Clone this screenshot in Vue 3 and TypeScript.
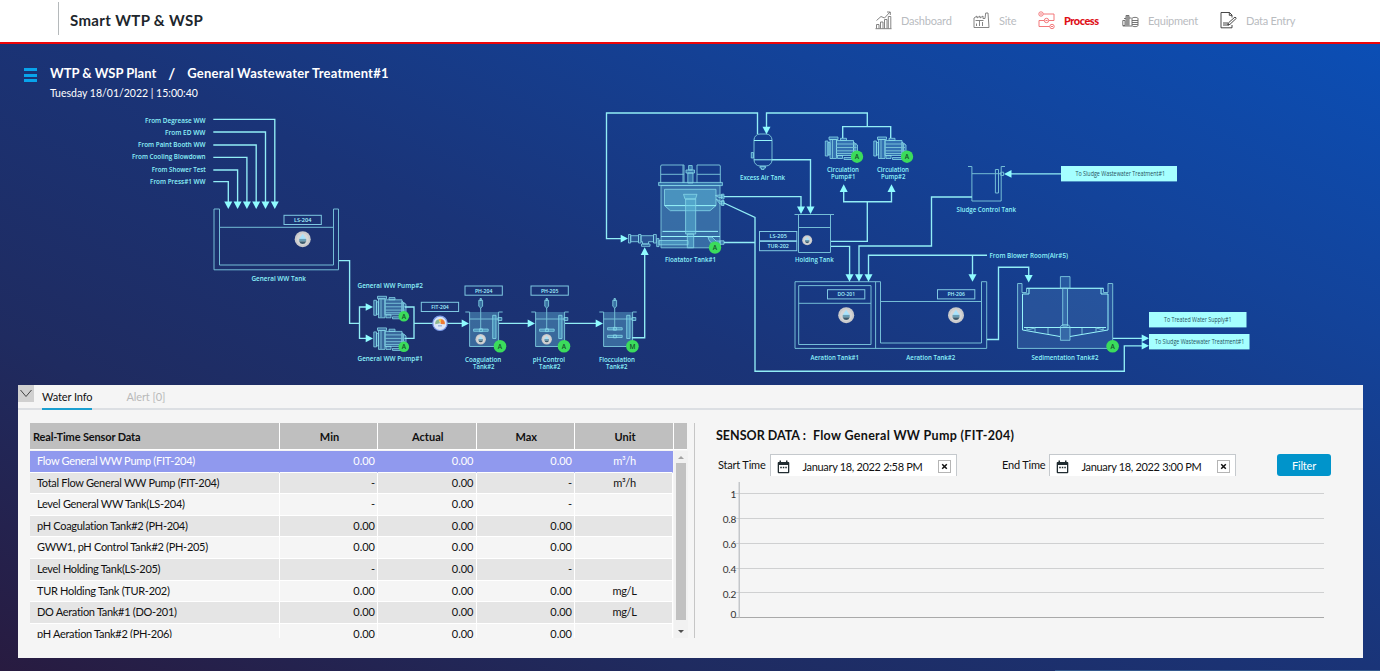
<script setup lang="ts">
interface Label { t: string; x1: number; x2: number; y: number }
interface Point { x: number; y: number }

const nav = [
  { id: 'dash', name: 'Dashboard' },
  { id: 'site', name: 'Site' },
  { id: 'process', name: 'Process' },
  { id: 'equip', name: 'Equipment' },
  { id: 'entry', name: 'Data Entry' },
]

const labels: Label[] = [
  { t: 'From Degrease WW', x1: 145, x2: 205.5, y: 120.7 },
  { t: 'From ED WW', x1: 165, x2: 205.5, y: 132.8 },
  { t: 'From Paint Booth WW', x1: 138, x2: 205.5, y: 145 },
  { t: 'From Cooling Blowdown', x1: 132, x2: 205.5, y: 156.7 },
  { t: 'From Shower Test', x1: 151.7, x2: 205.8, y: 169.5 },
  { t: 'From Press#1 WW', x1: 150, x2: 205.5, y: 181.7 },
  { t: 'General WW Tank', x1: 251.5, x2: 306, y: 278.3 },
  { t: 'General WW Pump#2', x1: 357.5, x2: 423, y: 285.5 },
  { t: 'General WW Pump#1', x1: 357.5, x2: 423, y: 358.5 },
  { t: 'Coagulation', x1: 465, x2: 501.3, y: 359.5 },
  { t: 'Tank#2', x1: 473, x2: 494.5, y: 366.7 },
  { t: 'pH Control', x1: 532.7, x2: 565, y: 359.5 },
  { t: 'Tank#2', x1: 539, x2: 560.5, y: 366.7 },
  { t: 'Flocculation', x1: 599, x2: 635, y: 359.5 },
  { t: 'Tank#2', x1: 606, x2: 627.5, y: 366.7 },
  { t: 'Floatator Tank#1', x1: 665, x2: 716, y: 259.5 },
  { t: 'Excess Air Tank', x1: 740, x2: 785, y: 177.5 },
  { t: 'Circulation', x1: 827, x2: 859, y: 169.7 },
  { t: 'Pump#1', x1: 831, x2: 855.5, y: 177 },
  { t: 'Circulation', x1: 877, x2: 909, y: 169.7 },
  { t: 'Pump#2', x1: 881, x2: 905.5, y: 177 },
  { t: 'Holding Tank', x1: 795, x2: 833.7, y: 259.5 },
  { t: 'Sludge Control Tank', x1: 956.5, x2: 1016, y: 210 },
  { t: 'From Blower Room(Air#5)', x1: 989.5, x2: 1068, y: 255.2 },
  { t: 'Aeration Tank#1', x1: 810.5, x2: 859, y: 357.3 },
  { t: 'Aeration Tank#2', x1: 906.3, x2: 955.3, y: 357.3 },
  { t: 'Sedimentation Tank#2', x1: 1031.5, x2: 1098.5, y: 357.3 },
]

const tags = [
  { t: 'LS-204', x: 284, y: 215.3 },
  { t: 'FIT-204', x: 421.3, y: 302.3 },
  { t: 'PH-204', x: 465, y: 286 },
  { t: 'PH-205', x: 531, y: 286 },
  { t: 'LS-205', x: 759.5, y: 231.5 },
  { t: 'TUR-202', x: 759.5, y: 241.5 },
  { t: 'DO-201', x: 827.5, y: 289.7 },
  { t: 'PH-206', x: 937.5, y: 289.7 },
]

const links = [
  { t: 'To Sludge Wastewater Treatment#1', x: 1061, y: 166, w: 116, x1: 1075.5, x2: 1165 },
  { t: 'To Treated Water Supply#1', x: 1149, y: 312, w: 97.5, x1: 1164, x2: 1231.5 },
  { t: 'To Sludge Wastewater Treatment#1', x: 1149, y: 334, w: 100.5, x1: 1155, x2: 1244.3 },
]

const badges = [
  { t: 'A', x: 403.8, y: 316.2, r: 5.3 }, { t: 'A', x: 403.8, y: 346.8, r: 5.3 },
  { t: 'A', x: 500, y: 346.3, r: 6.3 }, { t: 'A', x: 564, y: 346.3, r: 6.3 },
  { t: 'M', x: 632.4, y: 346.3, r: 6.3 }, { t: 'A', x: 715, y: 247.6, r: 6.2 },
  { t: 'A', x: 857, y: 156.7, r: 6.2 }, { t: 'A', x: 907, y: 156.7, r: 6.2 },
  { t: 'A', x: 1112.6, y: 346.3, r: 6.3 },
]

const sensors = [
  { x: 302.7, y: 239.2, r: 8 }, { x: 480.7, y: 339.2, r: 5.2 }, { x: 546.7, y: 339.2, r: 5.2 },
  { x: 807.2, y: 240.2, r: 5 }, { x: 846.2, y: 315.2, r: 8 }, { x: 956, y: 315.2, r: 8 },
]

const pumps: Point[] = [
  { x: 373, y: 295.3 }, { x: 373, y: 326.9 }, { x: 824.5, y: 136 }, { x: 873, y: 136 },
]

const mixers = [
  { x: 0, blades: [330.2] }, { x: 66, blades: [330.2] }, { x: 134, blades: [328.8, 336.4] },
]

const feeds = [
  { x: 228.3, y: 181.6 }, { x: 237.6, y: 170 }, { x: 246.9, y: 157.3 },
  { x: 256.2, y: 145 }, { x: 265.5, y: 132 }, { x: 274.8, y: 119.3 },
]

const down: Point[] = [
  ...feeds.map((f) => ({ x: f.x, y: 209 })),
  { x: 766.5, y: 134.3 }, { x: 801, y: 214 }, { x: 810.5, y: 214 },
  { x: 849.5, y: 281.7 }, { x: 859, y: 281.7 }, { x: 868.5, y: 281.7 },
  { x: 972.5, y: 281.7 }, { x: 1028.7, y: 282.5 },
]
const up: Point[] = [{ x: 644.7, y: 247.3 }, { x: 843.7, y: 184.3 }, { x: 891.5, y: 184.3 }]
const right: Point[] = [
  { x: 373, y: 307 }, { x: 373, y: 338.4 }, { x: 469, y: 323.4 }, { x: 535, y: 323.4 },
  { x: 603, y: 323.4 }, { x: 628, y: 238.6 }, { x: 1149, y: 338.3 }, { x: 1149, y: 345.8 },
]

const pipes = [
  'M339 260.6H349.6V323.4H359.5M368 307H359.5V338.4H368',
  'M405 307H414V338.4H405M414 323.4H463',
  'M499 323.4H530M565 323.4H598',
  'M632 337.7H644.7V254',
  'M757.5 134V113H606.5V238.6H623',
  'M766.5 128V113H867.3V126.6M842.7 138V126.6H890.7V138',
  'M772 159.7H810.5V208M724 196.6H801V208',
  'M843.7 190V201.7H891.5V190M867.3 201.7V241.3H831',
  'M831 246.3H849.6V276M859 276V246H931.5V197H972',
  'M868.5 276V255.2H987M972.5 255.2V276',
  'M724 203L755 217.5V371.2H1124.3V345.8H1142M724 242.5H755',
  'M1061 173.9H1010M987 339.5H998.5V267.2H1028.7V276M1113 338.3H1142',
]

const rows = [
  ['Flow General WW Pump (FIT-204)', '0.00', '0.00', '0.00', 'm³/h'],
  ['Total Flow General WW Pump (FIT-204)', '-', '0.00', '-', 'm³/h'],
  ['Level General WW Tank(LS-204)', '-', '0.00', '-', ''],
  ['pH Coagulation Tank#2 (PH-204)', '0.00', '0.00', '0.00', ''],
  ['GWW1, pH Control Tank#2 (PH-205)', '0.00', '0.00', '0.00', ''],
  ['Level Holding Tank(LS-205)', '-', '0.00', '-', ''],
  ['TUR Holding Tank (TUR-202)', '0.00', '0.00', '0.00', 'mg/L'],
  ['DO Aeration Tank#1 (DO-201)', '0.00', '0.00', '0.00', 'mg/L'],
  ['pH Aeration Tank#2 (PH-206)', '0.00', '0.00', '0.00', ''],
]

const ticks = [
  { t: '1', y: 11.5, ty: 16.2 }, { t: '0.8', y: 36.5, ty: 41.2 }, { t: '0.6', y: 61.5, ty: 66.2 },
  { t: '0.4', y: 86.5, ty: 90.8 }, { t: '0.2', y: 110.5, ty: 115.8 }, { t: '0', y: 135.5, ty: 136 },
]

const times = [
  { id: 'start', label: 'Start Time', value: 'January 18, 2022 2:58 PM' },
  { id: 'end', label: 'End Time', value: 'January 18, 2022 3:00 PM' },
]
</script>

<template>
  <div class="page">
    <header class="top">
      <div class="brand">Smart WTP &amp; WSP</div>
      <nav class="nav">
        <div v-for="n in nav" :key="n.id" class="nav-item" :class="n.id">
          <svg class="nav-icon" width="17" height="20" viewBox="0 0 17 20">
            <g v-if="n.id === 'dash'">
              <path d="M1.5 18.5V14.5H4V18.5M5.5 18.5V12H8V18.5M9.5 18.5V9.5H12V18.5M13.3 18.5V6.5H15.8V18.5M.5 18.7H16.5" />
              <path d="M1.5 10.5L6 6.5L9.5 8L15 2M12 2H15.3V5" />
            </g>
            <g v-else-if="n.id === 'site'">
              <path d="M1 17.5V8L4 6V8L7 6V8L10 6V8.5H12L12.7 3H15L16 17.5Z" />
              <path d="M3.5 16V13.5M6.5 16V11M9.5 16V12M2.5 10.5H10.5" />
            </g>
            <g v-else-if="n.id === 'process'">
              <circle cx="3" cy="4" r="2.2" /><circle cx="8.5" cy="10.5" r="2.2" /><circle cx="14" cy="16.5" r="2.2" />
              <path d="M5.3 4H16V10.5H10.8M6.2 10.5H1V16.5H11.7M2 4H4M7.5 10.5H9.5M13 16.5H15" />
            </g>
            <g v-else-if="n.id === 'equip'">
              <path d="M.8 15.5V10.5H3V15.5ZM4 15.5V5.5H7V15.5M7 8H9.5M2 8.5H4" />
              <path d="M10 8.5C10 7 16 7 16 8.5V15.5C16 17 10 17 10 15.5ZM10 10.5H16M10 12.5H16M10 14.5H16M5 5.5V15.5M6 5.5V15.5M.8 16H10" />
            </g>
            <g v-else>
              <path d="M12 15V17.8H1V2.5H9.5L12 5V7.5M9.3 2.5V5.3H12M3 13H8M3 15H9" />
              <path d="M15 7L16.3 8.3L10 14.3L7.8 15L8.5 12.8Z" />
            </g>
          </svg>
          <span>{{ n.name }}</span>
        </div>
      </nav>
    </header>

    <div class="crumbs">
      <div class="burger"><i /><i /><i /></div>
      <div>
        <div class="crumb-line"><span>WTP &amp; WSP Plant</span><span class="slash">/</span><span class="unit-name">General Wastewater Treatment#1</span></div>
        <div class="clock">Tuesday 18/01/2022 | 15:00:40</div>
      </div>
    </div>

    <svg class="diagram" width="1380" height="281" viewBox="0 104 1380 281">
      <g class="equip-lines">
        <path d="M214 209H219.5V265H333.5V209H338.5V269.8H214ZM219.5 227.3H333.5" />
        <path d="M795 281.7H880.5V343H981.5V281.7H986.7V348.4H795ZM875.6 281.7V348.4M798.7 285.6H871V344.5H798.7ZM798.7 303.3H871M880.5 301.5H981.5" />
        <path class="tint" d="M1017.6 283.5H1022V292.5H1026.5V288.3H1103.5V292.5H1108V283.5H1112.7V348.4H1017.6Z" />
        <path class="bright" d="M1026.5 288.3H1103.5M1029 288.5V294H1022.5V330L1060 336.5M1101 288.5V294H1108V330L1070 336.5M1024 327.5H1106" />
        <path d="M1035 328V332M1048 328V334M1082 328V334M1096 328V332M1027 328V331M1103 328V331M1035 328L1027 330M1096 328L1104 330" />
        <path class="fill dim" d="M1060.4 276.6H1070V288.3H1060.4ZM1062.7 288.3H1067.5V326H1062.7ZM1060.4 326.5L1062.5 324.7H1068L1070 326.5V340.3H1060.4Z" />
        <path d="M794.5 214.5H834M798.5 214.5V252.5H830.5V214.5M798.5 227.5H830.5" />
        <path d="M968 166.5H971.9V201H1001.2V166.5H1005M971.9 173.7H1001.2M995.4 169.5H998.5V193H995.4ZM1000.8 172.2H1003.6V175.5H1000.8Z" />
        <rect x="754" y="134" width="18" height="32" rx="6" />
        <path class="bright" d="M754 140.5H772M754 159.8H772" />
        <path class="fill" d="M751.3 152.5H753.5V158H751.3ZM760 166.3H765.5V168H764V169.5H761.5V168H760Z" />
      </g>

      <g class="equip-lines">
        <path d="M660.7 183V166Q660.7 165 662 165H684V183M660.7 174.3H684M720.3 183V166Q720.3 165 719 165H697V183M697 174.3H720.3M683 165V183" />
        <path class="tint2" d="M661 185.5H720V247.8H661Z" />
        <path class="fill" d="M658.6 182.4H722.4V185.6H658.6ZM687.8 173H693V183H687.8ZM686 170H694.5V173H686ZM688.6 165.5H692.2V170H688.6Z" />
        <path class="fill" d="M664.5 189.3H716V205.5L710 210.7H670.3L664.5 205.5Z" />
        <path class="bright" d="M664.5 205.6H716M662.5 231.4H718M661 236.5H720" />
        <path class="fill" d="M683.5 194.3H697L695.5 199H685ZM685.6 199H695.7V234H685.6ZM687.3 234H693.7V247.8H687.3Z" />
        <path class="fill" d="M659 240.5H688V244.8H659ZM656.7 238.6H659V246.6H656.7ZM708 237H712L716 241H720V245.5H716Q709 243 708 237Z" />
        <path class="fill" d="M715.5 195.5L719 197.5H723V195H719.5ZM716 199L720 204H724V201.5H721ZM720 240.8H724V244.3H720Z" />
        <path class="fill" d="M721.5 194.2H724V199H721.5ZM721.5 200.5H724V205.5H721.5Z" />
        <path class="fill dim" d="M628.5 234.5H630.7V243H628.5ZM630.7 235.7H638.5V241.7H630.7ZM638.5 234.5H641V243H638.5ZM641 235.7H653.5V241.7H648.5V244H642.5V241.7H641ZM653.5 234.5H656.3V243H653.5ZM641.5 244H650V246.3H641.5Z" />
      </g>

      <g v-for="p in pumps" :key="`${p.x}-${p.y}`" class="equip-lines pump" :transform="`translate(${p.x} ${p.y})`">
        <path class="fill" d="M.8 5H3.5V20H.8ZM3.5 6.5H5.5V19H3.5ZM5.5 3.5H12V22.5H5.5ZM4.5 1H13.5V3.5H4.5ZM12 4.5H29V19.5H12ZM29 6L33 9V19.5H29ZM16 2.3H22V4.5H16ZM13 19.5H18V22.5H13ZM19.5 21.5H30V23.5H19.5Z" />
        <path d="M12 8H32M12 11.5H32M12 14.8H32M12 17.5H32M8 4V22M30.5 7V20" />
      </g>

      <g v-for="m in mixers" :key="m.x" class="equip-lines" :transform="`translate(${m.x} 0)`">
        <path class="tint2" stroke="none" d="M469.6 312H498.6V346.5H469.6Z" />
        <path d="M465.3 312H469.6V346.5H498.6V312H502.7M469.6 319H498.6" />
        <path class="fill" d="M492.7 315.3H496V338.5H492.7ZM498 317.5H501.8V320.5H498Z" />
        <path d="M480.7 308V330" />
        <path class="fill" d="M478.8 300.3H482.6V306.3L480.7 308L478.8 306.3ZM480 298.5H481.4V300.3H480Z" />
        <path v-for="b in m.blades" :key="b" class="fill" :d="`M473.6 ${b - 1.1}H488.2V${b + 1.1}H473.6ZM479.4 ${b - 1.4}H482.4V${b + 1.4}H479.4Z`" />
      </g>

      <g class="pipes">
        <path v-for="f in feeds" :key="f.x" :d="`M213.3 ${f.y}H${f.x}V204`" />
        <path v-for="d in pipes" :key="d" :d="d" />
      </g>
      <g class="arrows">
        <path v-for="a in down" :key="`d${a.x}`" :d="`M${a.x - 4} ${a.y - 7.5}h8l-4 7.5z`" />
        <path v-for="a in up" :key="`u${a.x}`" :d="`M${a.x - 4} ${a.y + 7.8}h8l-4 -7.8z`" />
        <path v-for="a in right" :key="`r${a.x}-${a.y}`" :d="`M${a.x - 7.3} ${a.y - 3.8}v7.6l7.3 -3.8z`" />
        <path d="M1011.5 170.1v7.6l-7.5 -3.8z" />
      </g>

      <g v-for="s in sensors" :key="s.x" :transform="`translate(${s.x} ${s.y}) scale(${s.r / 8})`">
        <circle r="8" fill="#c9cacc" />
        <circle r="6" fill="#d6d6d6" />
        <path d="M0 -5.5L3.4 -.5V0H-3.4V-.5Z" fill="#a9e2fb" />
        <path d="M-3.5 -.3H3.5V2.4H-3.5Z" fill="#6a9eb5" />
        <path d="M-3.4 2.2H3.4Q2.5 4.8 0 4.8T-3.4 2.2Z" fill="#3c5a6c" />
      </g>

      <g transform="translate(440 323.3)">
        <circle r="7.2" fill="#dbe6f7" stroke="#7c9bea" stroke-width="1.2" />
        <path d="M-4.8 1A4.8 4.8 0 0 1 -1.5 -4L0 0Z" fill="#8fb98f" />
        <path d="M-1.5 -4A4.8 4.8 0 0 1 1.5 -4.4L.5 0Z" fill="#f5c63c" />
        <path d="M1.3 -4.4A4.8 4.8 0 0 1 4.8 1L.5 .6Z" fill="#ee7b33" />
        <rect x="-2" y="1.8" width="4" height="1.4" fill="#9db4dc" />
      </g>

      <g v-for="t in tags" :key="t.t" class="tag">
        <rect :x="t.x" :y="t.y" width="37.3" height="9.2" />
        <text :x="t.x + 18.7" :y="t.y + 6.7" :textLength="t.t === 'TUR-202' ? 21.5 : 17.5" lengthAdjust="spacingAndGlyphs">{{ t.t }}</text>
      </g>

      <g v-for="l in links" :key="l.y" class="link">
        <rect :x="l.x" :y="l.y" :width="l.w" height="15.4" />
        <text :x="l.x1" :y="l.y + 9.8" :textLength="l.x2 - l.x1" lengthAdjust="spacingAndGlyphs">{{ l.t }}</text>
      </g>

      <g v-for="b in badges" :key="`${b.x}-${b.y}`" class="badge">
        <circle :cx="b.x" :cy="b.y" :r="b.r" />
        <text :x="b.x" :y="b.y + 2.4">{{ b.t }}</text>
      </g>

      <g class="labels">
        <text v-for="l in labels" :key="`${l.x1}-${l.y}`" :x="l.x1" :y="l.y + 2.4" :textLength="l.x2 - l.x1" lengthAdjust="spacingAndGlyphs">{{ l.t }}</text>
      </g>
    </svg>

    <section class="panel">
      <div class="tabs">
        <button class="collapse" aria-label="Collapse">
          <svg width="16" height="17" viewBox="0 0 16 17"><path d="M2.5 5L8 11.5L13.5 5" /></svg>
        </button>
        <span class="tab active">Water Info</span>
        <span class="tab">Alert [0]</span>
      </div>
      <div class="body">
        <div class="grid">
          <div class="row head">
            <div>Real-Time Sensor Data</div><div>Min</div><div>Actual</div><div>Max</div><div>Unit</div>
            <div class="corner" />
          </div>
          <div class="scroll">
            <div class="rows">
              <div v-for="(r, i) in rows" :key="r[0]" class="row" :class="{ sel: i === 0, odd: i % 2 === 1 }">
                <div v-for="(c, j) in r" :key="j">{{ c }}</div>
              </div>
            </div>
            <div class="bar"><span class="tri-up" /><span class="thumb" /><span class="tri-down" /></div>
          </div>
        </div>

        <div class="chart-side">
          <h2>SENSOR DATA :<span>Flow General WW Pump (FIT-204)</span></h2>
          <div class="filters">
            <div v-for="t in times" :key="t.id" class="field" :class="t.id">
              <label>{{ t.label }}</label>
              <div class="input">
                <svg width="13" height="14" viewBox="0 0 13 14">
                  <path d="M2.5 .5H4V2H9V.5H10.5V2H11.5Q12.3 2 12.3 3V12.2Q12.3 13.2 11.3 13.2H1.7Q.7 13.2 .7 12.2V3Q.7 2 1.5 2H2.5ZM2 5V12H11V5Z" fill-rule="evenodd" fill="#212c31" />
                  <path d="M3.2 7.5H4.8M5.8 7.5H7.3M8.3 7.5H9.8" stroke="#212c31" stroke-width="1.3" />
                </svg>
                <span class="value">{{ t.value }}</span>
                <span class="clear"><svg width="7" height="7" viewBox="0 0 7 7"><path d="M1.2 1.2L5.8 5.8M5.8 1.2L1.2 5.8" /></svg></span>
              </div>
            </div>
            <button class="filter">Filter</button>
          </div>
          <svg class="chart" width="640" height="150" viewBox="0 0 640 150">
            <g v-for="k in ticks" :key="k.t">
              <rect x="34" :y="k.y - 0.5" width="590" height="1" :fill="k.t === '0' ? '#a9a9a9' : '#cfd0d1'" />
              <text x="36" :y="k.ty" class="tick">{{ k.t }}</text>
            </g>
            <rect x="38.6" y="0" width="1.2" height="136" fill="#b8bcc0" />
          </svg>
        </div>
      </div>
    </section>
    <div class="edge" />
  </div>
</template>

<style>
body { margin: 0; overflow: hidden; }
</style>

<style scoped>
.page {
  position: relative;
  width: 1380px;
  height: 671px;
  overflow: hidden;
  font-family: Lato, "Open Sans", sans-serif;
  background: linear-gradient(to top right, #281b40 0%, #1f2b60 25%, #1a3478 50%, #13439a 75%, #0a50b9 100%);
}
.top {
  box-sizing: border-box;
  height: 44px;
  display: flex;
  justify-content: space-between;
  background: #fff;
  border-bottom: 2px solid #ee0508;
}
.brand {
  margin: 2px 0 0 58px;
  height: 33px;
  line-height: 36px;
  padding-left: 11px;
  border-left: 1px solid #b5b9bb;
  font-weight: 700;
  font-size: 15px;
  letter-spacing: 0.36px;
  color: #20262c;
}
.nav {
  display: grid;
  grid-template-columns: 98px 65px 84px 98px 80px;
  margin-right: 80px;
  height: 40px;
  align-items: center;
  font-size: 11px;
  letter-spacing: -0.25px;
  color: #b9bcbf;
}
.nav-item { display: flex; align-items: center; gap: 9px; white-space: nowrap; }
.nav-item.dash { letter-spacing: -0.2px; }
.nav-icon { fill: none; stroke: #777; stroke-width: 0.9; flex: none; }
.nav-item.entry .nav-icon { stroke: #333; }
.nav-item.equip .nav-icon { stroke: #666; }
.process { color: #de0f17; font-weight: 900; letter-spacing: -0.5px; }
.process .nav-icon { stroke: #f2696c; }

.crumbs { display: flex; height: 60px; color: #fff; }
.burger { width: 13px; margin: 24px 13px 0 24px; display: flex; flex-direction: column; gap: 2.5px; }
.burger i { height: 3px; background: #08a4ec; }
.crumb-line { margin-top: 20px; line-height: 18px; font-size: 13px; font-weight: 700; display: flex; }
.unit-name { letter-spacing: 0.2px; }
.slash { margin: 0 12px; font-size: 15px; }
.clock { margin-top: 3px; line-height: 16px; font-size: 10.5px; }

.diagram { display: block; }
.diagram text { font-family: "Open Sans", "Noto Sans", sans-serif; }
.equip-lines { fill: none; stroke: #74bdd6; stroke-width: 1; }
.equip-lines .fill { fill: rgba(95, 190, 220, 0.45); stroke: #86d8e8; stroke-width: 0.8; }
.equip-lines .dim { fill: rgba(95, 170, 210, 0.25); }
.equip-lines .tint { fill: rgba(110, 170, 210, 0.2); }
.equip-lines .tint2 { fill: rgba(100, 180, 215, 0.42); }
.equip-lines .bright { stroke: #97f4fa; }
.pump .fill { fill: rgba(95, 180, 220, 0.42); }
.pipes { fill: none; stroke: #92eef6; stroke-width: 1.35; }
.arrows { fill: #8ffcff; }
.tag rect { fill: none; stroke: #7fc8e2; stroke-width: 1; }
.tag text { fill: #a5f4ff; font-size: 6px; font-weight: 600; text-anchor: middle; }
.link rect { fill: #a5ffff; }
.link text { fill: #25505c; font-size: 6.2px; }
.badge circle { fill: #3bdc5c; }
.badge text { fill: #15502a; font-size: 6.5px; font-weight: 600; text-anchor: middle; }
.labels text { fill: #8df3fb; font-size: 6.9px; font-weight: 600; }

.panel { width: 1345px; height: 273px; margin-left: 18px; background: #f5f5f5; font-size: 11px; color: #111; }
.tabs { display: flex; height: 23px; border-bottom: 2px solid #dcdfe3; }
.collapse { width: 16px; height: 17px; padding: 0; border: 0; background: #d0d0d0; }
.collapse svg { display: block; fill: none; stroke: #444; stroke-width: 1; }
.tab { height: 23px; line-height: 23px; margin-left: 34px; letter-spacing: -0.1px; color: #b9b9b9; }
.tab.active { margin-left: 8px; color: #111; border-bottom: 2px solid #1b9fd0; }
.body { display: flex; padding: 13px 0 0 12px; }
.grid { width: 664px; height: 215px; border-right: 1px solid #c6c6c6; }
.row { display: grid; grid-template-columns: 250px 98px 98.5px 98.5px 98px; height: 21.6px; line-height: 20.6px; }
.row > div { box-sizing: border-box; border-right: 1px solid #fff; border-bottom: 1px solid #fff; padding-right: 2px; text-align: right; overflow: hidden; white-space: nowrap; }
.row > div:first-child { text-align: left; padding-left: 7px; letter-spacing: -0.3px; }
.row > div:nth-child(5) { text-align: center; padding: 0 0 0 2px; letter-spacing: -0.3px; }
.row.odd { background: #e5e5e5; }
.row.sel { background: #9099ee; color: #fff; }
.row.sel > div { border-right-color: transparent; }
.row.head { grid-template-columns: 250px 98px 98.5px 98.5px 99px 13px; height: 27px; line-height: 28px; font-weight: 700; }
.row.head > div { background: #bfbfbf; text-align: center; padding: 0 0 0 2px; letter-spacing: 0; }
.row.head > div:first-child { text-align: left; padding-left: 3px; letter-spacing: -0.15px; }
.row.head > .corner { border-right: 0; }
.scroll { display: flex; height: 187px; margin-top: 1px; overflow: hidden; }
.rows { width: 643px; overflow: hidden; }
.bar { width: 14px; margin-left: 1px; display: flex; flex-direction: column; align-items: center; background: #f1f1f1; }
.tri-up { margin: 5px 0 4px; border: 3px solid transparent; border-top: 0; border-bottom: 3px solid #a3a3a3; }
.thumb { width: 10px; height: 157px; background: #c1c1c1; }
.tri-down { margin-top: 10px; border: 3px solid transparent; border-bottom: 0; border-top: 3px solid #505050; }

.chart-side { flex: 1; padding-left: 5px; }
h2 { margin: 4px 0 0 16px; font-size: 12.5px; line-height: 18px; font-weight: 700; white-space: nowrap; }
h2 span { margin-left: 7px; letter-spacing: 0.32px; }
.filters { display: flex; margin: 9px 0 0 18px; height: 22px; }
.field { display: flex; }
.field label { width: 52px; line-height: 22px; white-space: nowrap; letter-spacing: -0.2px; }
.field.end { margin-left: 45px; }
.field.end label { width: 47px; }
.input { box-sizing: border-box; width: 187px; height: 22px; display: flex; align-items: center; padding: 2px 5px 0 6px; background: #fff; border: 1px solid #c5c9cd; border-bottom: 0; }
.value { flex: 1; padding-left: 12.5px; white-space: nowrap; letter-spacing: -0.33px; }
.clear { box-sizing: border-box; width: 13px; height: 13px; display: grid; place-items: center; border: 1px solid #b5b5b5; }
.clear svg { display: block; }
.clear path { stroke: #111; stroke-width: 1.5; }
.filter { margin-left: 41px; width: 54px; height: 22px; border: 0; border-radius: 3px; background: #0094cb; color: #fff; font: inherit; letter-spacing: -0.2px; padding: 0; }
.chart { display: block; margin-top: 6px; }
.tick { font-size: 10px; text-anchor: end; fill: #333; letter-spacing: -0.2px; }
.edge { position: absolute; right: 0; bottom: 0; width: 325px; height: 1px; background: #35598f; }
</style>
